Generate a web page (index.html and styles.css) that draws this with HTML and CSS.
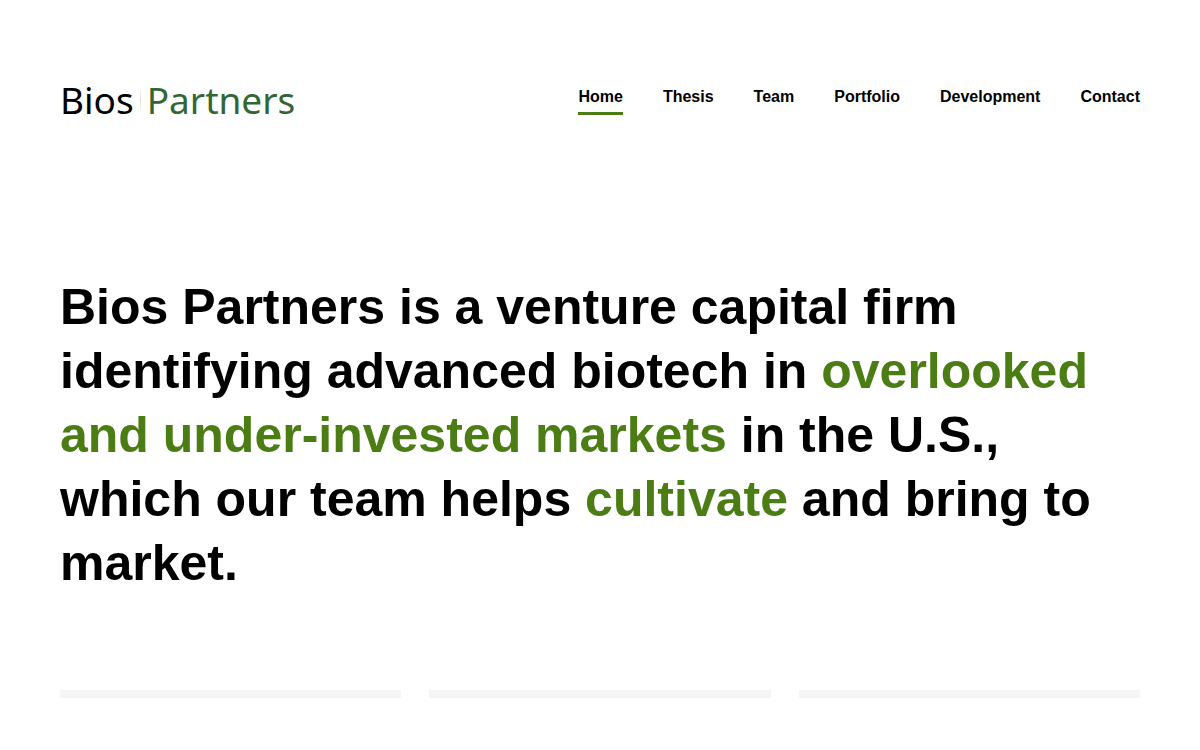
FILE: index.html
```html
<!DOCTYPE html>
<html lang="en">

<head>
    <meta charset="UTF-8">
    <meta name="viewport" content="width=device-width, initial-scale=1.0">
    <title>Bios Partners</title>
    <link rel="stylesheet" href="styles.css">
</head>

<body>

    <header class="site-header">
        <a href="/" class="logo">
            <span class="logo-bios">Bios</span>
            <span class="logo-divider"></span>
            <span class="logo-partners">Partners</span>
        </a>
        <nav class="main-nav">
            <a href="/" class="active">Home</a>
            <a href="/thesis">Thesis</a>
            <a href="/team">Team</a>
            <a href="/portfolio">Portfolio</a>
            <a href="/development">Development</a>
            <a href="/contact">Contact</a>
        </nav>
    </header>

    <main>
        <h1>Bios Partners is a venture capital firm identifying advanced biotech in <em>overlooked and under-invested markets</em> in the U.S., which our team helps <em>cultivate</em> and bring to market.</h1>

        <!-- Column bars -->
        <div class="columns">
            <div class="column"></div>
            <div class="column"></div>
            <div class="column"></div>
        </div>
    </main>

</body>

</html>
```

FILE: styles.css
```css
body {
    margin: 0;
    padding: 80px 60px 52px;
    background-color: #fff;
    color: #000;
    font-family: "Liberation Sans", Arial, sans-serif;
}

a {
    color: inherit;
    text-decoration: none;
}

.site-header {
    display: flex;
    justify-content: space-between;
    align-items: flex-start;
}

.logo {
    display: flex;
    align-items: center;
    gap: 6px;
    font-family: "Noto Sans", "Open Sans", sans-serif;
    font-size: 37px;
    line-height: 40px;
}

.logo-divider {
    width: 1px;
    height: 26px;
    background: linear-gradient(#fff, #ddd, #fff);
}

.logo-partners {
    color: #336633;
}

.main-nav {
    display: flex;
    gap: 40px;
    font-size: 16px;
    font-weight: bold;
    line-height: 30px;
}

.main-nav a {
    padding-top: 2px;
    border-bottom: 3px solid transparent;
}

.main-nav a.active {
    border-color: #4c7d15;
}

h1 {
    margin: 155px 0 95px;
    font-size: 50px;
    line-height: 64px;
}

h1 em {
    color: #4c7d15;
    font-style: normal;
}

.columns {
    display: grid;
    grid-template-columns: repeat(3, 1fr);
    gap: 28px;
}

.column {
    height: 8px;
    background-color: #f5f5f5;
}
```
